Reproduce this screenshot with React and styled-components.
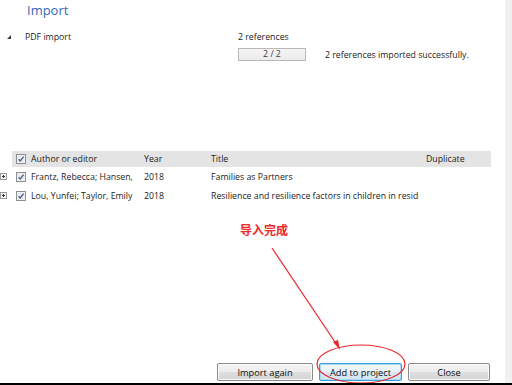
import React from "react";
import styled, { createGlobalStyle } from "styled-components";

const Global = createGlobalStyle`
  html, body { margin: 0; padding: 0; background: #fff; }
  body { font-family: "Open Sans", "Liberation Sans", sans-serif; color: #1b1b1b; }
`;

const Window = styled.div`
  width: 512px;
  height: 385px;
  box-sizing: border-box;
  border-bottom: 2px solid #000;
  display: flex;
  overflow: hidden;
`;

const Main = styled.div`
  position: relative;
  flex: 1;
  display: flex;
  flex-direction: column;
  font-size: 8.75px;
`;

const Gutter = styled.div`
  width: 7px;
  background: #f0f0f0;
`;

const Title = styled.h1`
  margin: 0;
  height: 31px;
  box-sizing: border-box;
  padding: 2px 0 0 27px;
  font-size: 13px;
  line-height: 17px;
  font-weight: 400;
  color: #3567b9;
`;

const SourceRow = styled.div`
  display: flex;
  padding-left: 7px;
`;

const Toggle = styled.div`
  width: 18px;
  height: 12px;
  display: flex;
  align-items: center;
`;

const SourceName = styled.div`
  width: 213px;
  line-height: 12px;
`;

const Status = styled.div`
  display: flex;
  flex-direction: column;
  gap: 5px;
`;

const Line = styled.div`
  line-height: 12px;
`;

const ProgressRow = styled.div`
  display: flex;
  align-items: center;
  gap: 19px;
`;

const Progress = styled.div`
  width: 68px;
  height: 13px;
  box-sizing: border-box;
  border: 1px solid #b8b8b8;
  background: linear-gradient(#f5f5f5, #ebebeb);
  color: #3a3a3a;
  text-align: center;
  line-height: 11px;
`;

const Table = styled.div`
  margin-top: 90px;
  display: flex;
  flex-direction: column;
`;

const Header = styled.div`
  margin-left: 12px;
  width: 479px;
  height: 16px;
  background: #e4e4e4;
  display: grid;
  grid-template-columns: 19px 113px 67px 214px 1fr;
  align-items: center;
`;

const Row = styled.div`
  height: 19.5px;
  display: grid;
  grid-template-columns: 12px 19px 113px 67px 214px 1fr;
  align-items: center;
`;

const Cell = styled.div`
  white-space: nowrap;
  overflow: hidden;
  padding-left: ${(p) => p.$pad || 0}px;
`;

const BoxCell = styled.div`
  display: flex;
  align-items: center;
  padding-left: 4px;
`;

const Note = styled.div`
  position: absolute;
  left: 240px;
  top: 222px;
  font-family: "Noto Sans CJK SC", sans-serif;
  font-weight: 700;
  font-size: 12px;
  line-height: 16px;
  color: #ee2a2a;
`;

const Overlay = styled.svg`
  position: absolute;
  left: 0;
  top: 0;
  width: 505px;
  height: 385px;
  pointer-events: none;
`;

const Footer = styled.div`
  margin-top: auto;
  display: flex;
  justify-content: flex-end;
  gap: 6px;
  padding: 0 15px 2px 0;
`;

const Button = styled.button`
  width: ${(p) => p.$w}px;
  height: 18px;
  padding: 0;
  font-family: inherit;
  font-size: 9.25px;
  color: #111;
  border-radius: 2px;
  border: 1px solid ${(p) => (p.$default ? "#3c9ad6" : "#8a8a8a")};
  background: ${(p) =>
    p.$default
      ? "linear-gradient(#f3f9fd, #e6f0f8 50%, #dbe9f5 50%, #d3e4f2)"
      : "linear-gradient(#f4f4f4, #ececec 50%, #dfdfdf 50%, #d4d4d4)"};
  box-shadow: inset 0 0 0 1px ${(p) => (p.$default ? "#a9daf6" : "#fbfbfb")};
`;

const Check = () => (
  <svg width="10" height="10" viewBox="0 0 10 10">
    <rect x="0.5" y="0.5" width="9" height="9" fill="#f4f4f4" stroke="#8e8f8f" />
    <rect x="1.5" y="1.5" width="7" height="7" fill="#e8ebf0" />
    <path d="M2.6 5.2 L4.2 7 L7.6 2.6" fill="none" stroke="#4d6185" strokeWidth="1.3" />
  </svg>
);

const Expander = () => (
  <svg width="7" height="7" viewBox="0 0 7 7">
    <rect x="0.5" y="0.5" width="6" height="6" fill="#f6f6f6" stroke="#9a9a9a" />
    <path d="M2 3.5 H5 M3.5 2 V5" stroke="#333" strokeWidth="1" />
  </svg>
);

const rows = [
  { author: "Frantz, Rebecca; Hansen,", year: "2018", title: "Families as Partners" },
  { author: "Lou, Yunfei; Taylor, Emily", year: "2018", title: "Resilience and resilience factors in children in resid" },
];

export default function App() {
  return (
    <>
      <Global />
      <Window>
        <Main>
          <Title>Import</Title>
          <SourceRow>
            <Toggle>
              <svg width="4" height="4" viewBox="0 0 4 4">
                <polygon points="4,0 4,4 0,4" fill="#3a3a3a" />
              </svg>
            </Toggle>
            <SourceName>PDF import</SourceName>
            <Status>
              <Line>2 references</Line>
              <ProgressRow>
                <Progress>2 / 2</Progress>
                <Line>2 references imported successfully.</Line>
              </ProgressRow>
            </Status>
          </SourceRow>

          <Table>
            <Header>
              <BoxCell><Check /></BoxCell>
              <Cell>Author or editor</Cell>
              <Cell>Year</Cell>
              <Cell>Title</Cell>
              <Cell $pad={1}>Duplicate</Cell>
            </Header>
            {rows.map((r) => (
              <Row key={r.author}>
                <Cell><Expander /></Cell>
                <BoxCell><Check /></BoxCell>
                <Cell>{r.author}</Cell>
                <Cell>{r.year}</Cell>
                <Cell>{r.title}</Cell>
                <Cell />
              </Row>
            ))}
          </Table>

          <Note>导入完成</Note>
          <Overlay viewBox="0 0 505 385">
            <line x1="272" y1="248" x2="337" y2="345" stroke="#e8262b" strokeWidth="1.2" />
            <polygon points="340,350 333,342 338,340" fill="#e8262b" />
            <ellipse cx="361" cy="364" rx="44" ry="19" fill="none" stroke="#e8262b" strokeWidth="1.2" />
          </Overlay>

          <Footer>
            <Button $w={96}>Import again</Button>
            <Button $w={83} $default>Add to project</Button>
            <Button $w={82}>Close</Button>
          </Footer>
        </Main>
        <Gutter />
      </Window>
    </>
  );
}
